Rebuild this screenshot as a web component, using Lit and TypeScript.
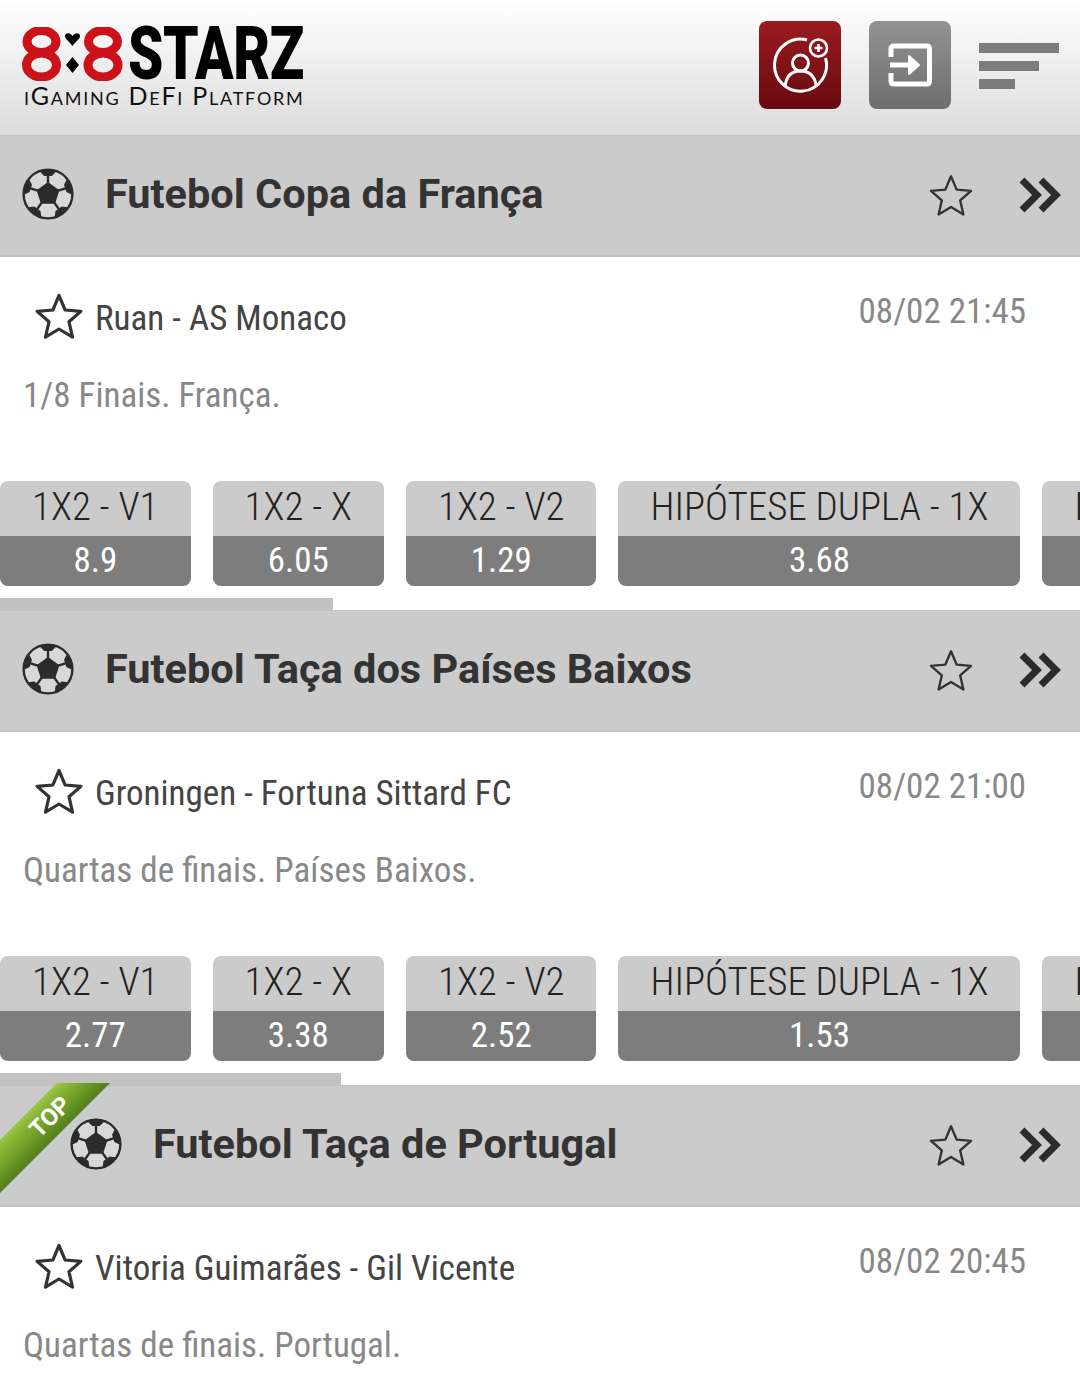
import { LitElement, html, css, svg } from 'lit'
import { customElement } from 'lit/decorators.js'

type League = {
    title: string
    match: string
    time: string
    info: string
    odds: string[]
    bar: number
    top?: boolean
}

const leagues: League[] = [
    {
        title: 'Futebol Copa da França',
        match: 'Ruan - AS Monaco',
        time: '08/02 21:45',
        info: '1/8 Finais. França.',
        odds: ['8.9', '6.05', '1.29', '3.68', '1.12'],
        bar: 333,
    },
    {
        title: 'Futebol Taça dos Países Baixos',
        match: 'Groningen - Fortuna Sittard FC',
        time: '08/02 21:00',
        info: 'Quartas de finais. Países Baixos.',
        odds: ['2.77', '3.38', '2.52', '1.53', '1.31'],
        bar: 341,
    },
    {
        title: 'Futebol Taça de Portugal',
        match: 'Vitoria Guimarães - Gil Vicente',
        time: '08/02 20:45',
        info: 'Quartas de finais. Portugal.',
        odds: [],
        bar: 0,
        top: true,
    },
]

const labels = ['1X2 - V1', '1X2 - X', '1X2 - V2', 'HIPÓTESE DUPLA - 1X', 'HIPÓTESE DUPLA - 12']

const polar = (cx: number, cy: number, r: number, deg: number) => {
    const a = ((deg - 90) * Math.PI) / 180
    return [cx + r * Math.cos(a), cy + r * Math.sin(a)]
}

const pts = (list: number[][]) => list.map((p) => p.map((n) => n.toFixed(2)).join(',')).join(' ')

const star = (size: number, stroke: number) => html`
    <svg class="star" width=${size} height=${size} viewBox="0 0 48 48">
        <polygon
            points=${pts(Array.from({ length: 10 }, (_, i) => polar(24, 25.5, i % 2 ? 10.5 : 23, i * 36)))}
            fill="none"
            stroke="#333"
            stroke-width=${stroke}
            stroke-linejoin="round"
        />
    </svg>
`

const ball = () => html`
    <svg class="ball" width="52" height="52" viewBox="0 0 52 52">
        <circle cx="26" cy="26" r="24.4" fill="#d8d8d8" stroke="#2b2b2b" stroke-width="2.4" />
        ${[0, 72, 144, 216, 288].map((a) => {
            const from = polar(26, 26, 10, a)
            const to = polar(26, 26, 20, a)
            return svg`
                <line x1=${from[0]} y1=${from[1]} x2=${to[0]} y2=${to[1]} stroke="#2b2b2b" stroke-width="2.4" />
                <polygon
                    fill="#2b2b2b"
                    points=${pts([
                        polar(26, 26, 25, a - 21),
                        polar(26, 26, 25, a),
                        polar(26, 26, 25, a + 21),
                        polar(26, 26, 18.5, a + 12),
                        polar(26, 26, 18.5, a - 12),
                    ])}
                />
            `
        })}
        <polygon fill="#2b2b2b" points=${pts([0, 72, 144, 216, 288].map((a) => polar(26, 26, 12, a)))} />
    </svg>
`

@customElement('app-root')
export class AppRoot extends LitElement {
    static get styles() {
        return css`
            :host {
                display: block;
                height: 100vh;
                overflow: hidden;
                background: #fff;
                font-family: Roboto, 'Liberation Sans', sans-serif;
            }

            .header {
                height: 135px;
                box-sizing: border-box;
                display: flex;
                align-items: flex-start;
                padding: 21px 21px 0 22px;
                background: linear-gradient(#ffffff, #dcdcdc);
            }

            .logo {
                flex: none;
                width: 284px;
            }

            .logo-top {
                display: flex;
                align-items: center;
                height: 54px;
                margin-top: 6px;
            }

            .logo-top svg {
                flex: none;
            }

            .wordmark {
                font-weight: 900;
                font-size: 74px;
                line-height: 54px;
                color: #000;
                transform: scaleX(0.765);
                transform-origin: left center;
                margin-left: 5px;
                letter-spacing: -0.5px;
            }

            .tagline {
                font-family: Lato, sans-serif;
                font-size: 25px;
                line-height: 22px;
                font-variant: small-caps;
                letter-spacing: 1.75px;
                color: #111;
                white-space: nowrap;
                margin: 3px 0 0 2px;
            }

            .actions {
                margin-left: auto;
                display: flex;
                gap: 28px;
                align-items: flex-start;
            }

            .action {
                width: 82px;
                height: 88px;
                border-radius: 8px;
                display: flex;
                align-items: center;
                justify-content: center;
            }

            .action.red {
                background: linear-gradient(#9b1b20, #660a0f);
            }

            .action.grey {
                background: linear-gradient(#929292, #6e6e6e);
            }

            .burger {
                width: 80px;
                display: flex;
                flex-direction: column;
                gap: 8px;
                padding-top: 22px;
            }

            .burger span {
                display: block;
                height: 10px;
                background: #7c7c7c;
            }

            .league {
                height: 475px;
                font-stretch: 87.5%;
            }

            .league-head {
                position: relative;
                height: 122px;
                box-sizing: border-box;
                display: flex;
                align-items: center;
                padding: 0 19px 2px 22px;
                background: #cbcbcb;
                border-top: 1px solid #c2c2c2;
                border-bottom: 2px solid #c2c2c2;
                font-stretch: 100%;
            }

            .league-head.top {
                padding-left: 70px;
            }

            .ball {
                margin-top: -2px;
            }

            .league-title {
                margin: -2px 0 0 31px;
                font-size: 41.5px;
                font-weight: 700;
                color: #333;
                white-space: nowrap;
            }

            .head-star {
                margin-left: auto;
                display: flex;
                margin-right: 46px;
                margin-top: 3px;
            }

            .ribbon {
                position: absolute;
                left: 0;
                top: -3px;
                width: 110px;
                height: 110px;
                background: linear-gradient(135deg, #9ac63f 26%, #4f7f18 50%);
                clip-path: polygon(57px 0, 110px 0, 0 110px, 0 57px);
            }

            .ribbon span {
                position: absolute;
                left: 25px;
                top: 20px;
                width: 50px;
                text-align: center;
                color: #fff;
                font-size: 24px;
                font-weight: 700;
                line-height: 28px;
                transform: rotate(-45deg);
            }

            .match {
                display: flex;
                justify-content: space-between;
                align-items: flex-start;
                padding: 38px 54px 0 35px;
            }

            .teams {
                display: flex;
                align-items: center;
                gap: 12px;
                font-size: 35px;
                line-height: 48px;
                color: #444;
            }

            .teams .star {
                margin-top: -4px;
            }

            .teams span {
                white-space: nowrap;
            }

            .time {
                font-size: 35px;
                line-height: 42px;
                color: #888;
                margin-top: -4px;
                white-space: nowrap;
            }

            .info {
                font-size: 35px;
                line-height: 44px;
                color: #888;
                margin: 31px 0 0 23px;
                white-space: nowrap;
            }

            .odds {
                display: flex;
                gap: 22px;
                margin-top: 63px;
                overflow: hidden;
            }

            .odd {
                flex: none;
                border-radius: 8px;
                overflow: hidden;
                text-align: center;
            }

            .odd-label {
                display: block;
                padding: 0 32px;
                height: 55px;
                line-height: 52px;
                font-size: 39px;
                font-weight: 300;
                color: #222;
                background: #cbcbcb;
                white-space: nowrap;
            }

            .odd-value {
                display: block;
                height: 50px;
                line-height: 50px;
                font-size: 35px;
                color: #fff;
                background: #7d7d7d;
            }

            .bar {
                height: 12px;
                margin-top: 12px;
                background: #c2c2c2;
            }
        `
    }

    private renderLogo() {
        const eight = (x: number) => svg`
            <ellipse cx=${x} cy="14.5" rx="14.5" ry="11" fill="none" stroke="#cc1118" stroke-width="9" />
            <ellipse cx=${x} cy="38" rx="15" ry="12" fill="none" stroke="#cc1118" stroke-width="9" />
        `
        return html`
            <svg width="101" height="54" viewBox="0 0 101 54">
                ${eight(19.5)} ${eight(81)}
                <path d="M50.5 19 C47 14 43 12 43 9 C43 5.5 48 5 50.5 9 C53 5 58 5.5 58 9 C58 12 54 14 50.5 19 Z" fill="#000" />
                <path d="M50.5 30 L57 38 L50.5 46 L44 38 Z" fill="#000" />
            </svg>
        `
    }

    private renderLeague(league: League) {
        return html`
            <section class="league">
                <div class="league-head ${league.top ? 'top' : ''}">
                    ${league.top ? html`<div class="ribbon"><span>TOP</span></div>` : ''}
                    ${ball()}
                    <div class="league-title">${league.title}</div>
                    <div class="head-star">${star(44, 2.6)}</div>
                    <svg width="42" height="38" viewBox="0 0 42 38">
                        <path d="M3 4 L18 19 L3 34 M22 4 L37 19 L22 34" fill="none" stroke="#2b2b2b" stroke-width="7" />
                    </svg>
                </div>
                <div class="match">
                    <div class="teams">${star(48, 3.2)}<span>${league.match}</span></div>
                    <div class="time">${league.time}</div>
                </div>
                <div class="info">${league.info}</div>
                ${league.odds.length
                    ? html`
                          <div class="odds">
                              ${league.odds.map(
                                  (value, i) => html`
                                      <div class="odd">
                                          <span class="odd-label">${labels[i]}</span>
                                          <span class="odd-value">${value}</span>
                                      </div>
                                  `
                              )}
                          </div>
                          <div class="bar" style="width: ${league.bar}px"></div>
                      `
                    : ''}
            </section>
        `
    }

    render() {
        return html`
            <header class="header">
                <div class="logo">
                    <div class="logo-top">
                        ${this.renderLogo()}
                        <span class="wordmark">STARZ</span>
                    </div>
                    <div class="tagline">iGaming DeFi Platform</div>
                </div>
                <div class="actions">
                    <div class="action red">
                        <svg width="60" height="60" viewBox="-1 0 60 60" fill="none" stroke="#fff">
                            <path d="M36 5 A26 26 0 1 0 54.5 23" stroke-width="3" />
                            <circle cx="29.5" cy="28" r="8" stroke-width="3" />
                            <path d="M14 52 C15 41 21 36 29.5 36 C38 36 44 41 45.5 52" stroke-width="3" />
                            <circle cx="47.5" cy="13" r="8.5" stroke-width="2.6" />
                            <path d="M43.5 13 H51.5 M47.5 9 V17" stroke-width="2.6" />
                        </svg>
                    </div>
                    <div class="action grey">
                        <svg width="44" height="44" viewBox="0 0 44 44" fill="none" stroke="#fff" stroke-width="5">
                            <path d="M3 14 V6 Q3 3 6 3 H39 Q41.5 3 41.5 6 V38 Q41.5 41 39 41 H6 Q3 41 3 38 V30" />
                            <path d="M2 22 H21" />
                            <path d="M21 13 L31 22 L21 31 Z" fill="#fff" stroke-width="2" stroke-linejoin="round" />
                        </svg>
                    </div>
                    <div class="burger">
                        <span></span>
                        <span style="width: 60px"></span>
                        <span style="width: 36px"></span>
                    </div>
                </div>
            </header>
            ${leagues.map((league) => this.renderLeague(league))}
        `
    }
}
